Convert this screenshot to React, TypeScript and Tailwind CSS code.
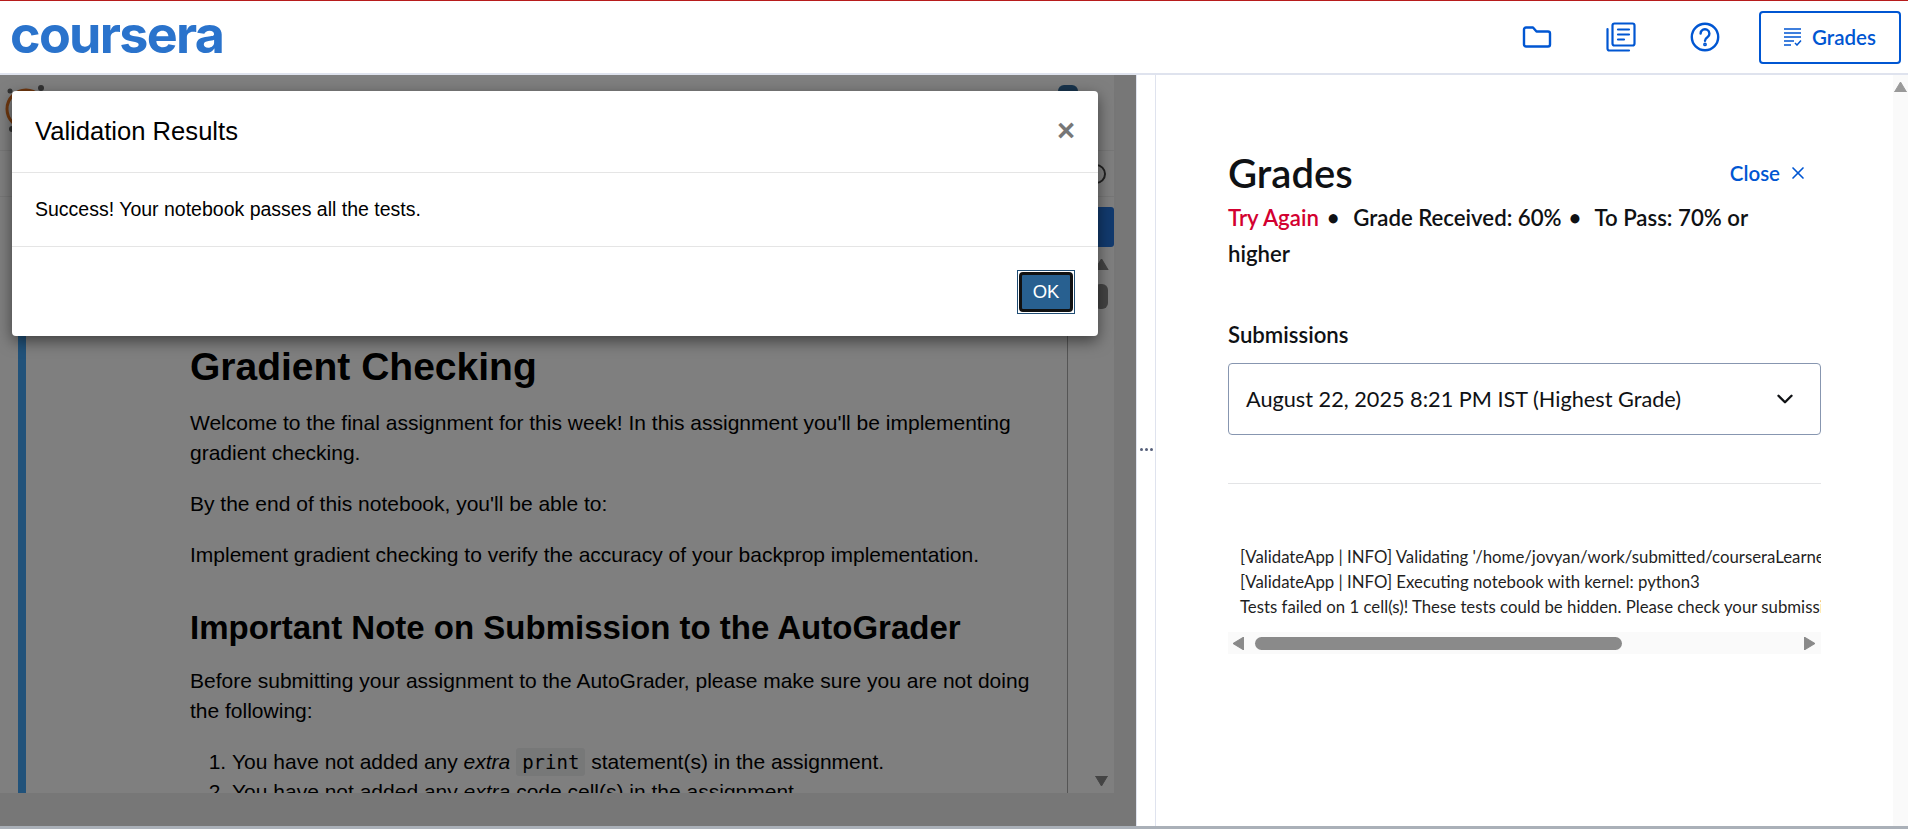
import React from "react"
import { ChevronDown, X } from "lucide-react"

const sans = "font-['Lato','Noto_Sans',sans-serif]"

const FolderIcon = () => (
    <svg width="30" height="22" viewBox="0 0 30 22" fill="none" stroke="#0056d2" strokeWidth="2.4" strokeLinejoin="round">
        <path d="M2 3.5a2 2 0 0 1 2-2h7l3.5 4H26a2 2 0 0 1 2 2V18.5a2 2 0 0 1-2 2H4a2 2 0 0 1-2-2z" />
    </svg>
)

const LibraryIcon = () => (
    <svg width="30" height="30" viewBox="0 0 30 30" fill="none" stroke="#0056d2" strokeWidth="2.2" strokeLinecap="round" strokeLinejoin="round">
        <rect x="6.5" y="1.5" width="22" height="22" rx="2" />
        <path d="M1.5 7v19.5a2 2 0 0 0 2 2H23" />
        <path d="M12 7.5h11M12 12.5h11M12 17.5h6" />
    </svg>
)

const HelpIcon = () => (
    <svg width="30" height="30" viewBox="0 0 30 30" fill="none" stroke="#0056d2" strokeWidth="2.4" strokeLinecap="round">
        <circle cx="15" cy="15" r="13.2" />
        <path d="M10.6 11.6a4.4 4.4 0 1 1 6.8 3.7c-1.5 1-2.4 1.8-2.4 3.4" />
        <circle cx="15" cy="22.4" r="0.7" fill="#0056d2" />
    </svg>
)

const GradesIcon = () => (
    <svg width="18" height="18" viewBox="0 0 18 18" fill="none" stroke="#0056d2" strokeWidth="1.5">
        <path d="M0 1h17M0 5h17M0 9h17M0 13h10M0 17h7" />
        <path d="M11 15l2 2 4-4.5" />
    </svg>
)

const Triangle = ({ dir, className }: { dir: "up" | "down" | "left" | "right"; className: string }) => {
    const points = {
        up: "6,0 12,10 0,10",
        down: "0,0 12,0 6,10",
        left: "10,0 10,12 0,6",
        right: "0,0 10,6 0,12"
    }
    return (
        <svg viewBox={dir === "up" || dir === "down" ? "0 0 12 10" : "0 0 10 12"} className={className}>
            <polygon points={points[dir]} fill="currentColor" stroke="currentColor" strokeWidth="1" strokeLinejoin="round" />
        </svg>
    )
}

const Notebook = () => (
    <div className="relative flex w-[1137px] flex-col border-r border-[#dfe3ee] bg-[#eeeeee] font-['Liberation_Sans',Arial,sans-serif]">
        <div className="flex h-[718px] w-[1114px] flex-col bg-white">
            <div className="flex h-[75px] items-start justify-between">
                <svg width="44" height="60" viewBox="0 0 44 60" className="ml-1 mt-[8px]" fill="none">
                    <circle cx="6" cy="8" r="2.5" fill="#666" />
                    <circle cx="37" cy="5" r="3" fill="#666" />
                    <circle cx="22" cy="26" r="19" stroke="#e0701f" strokeWidth="3" />
                    <circle cx="8" cy="46" r="3" fill="#666" />
                </svg>
                <div className="mr-[36px] mt-[10px] h-[20px] w-[20px] rounded-t-md bg-[#306998]" />
            </div>
            <div className="flex h-[47px] items-center justify-end border-y border-[#eeeeee] pr-[8px]">
                <div className="h-[20px] w-[20px] rounded-full border-2 border-[#444]" />
            </div>
            <div className="flex h-[60px] items-start justify-end pt-[10px]">
                <div className="h-[40px] w-[60px] rounded-[3px] bg-[#2574dc]" />
            </div>
            <div className="flex min-h-0 flex-1">
                <div className="ml-[18px] flex min-w-0 flex-1 overflow-hidden border-l-[8px] border-[#42a5f5]">
                    <div className="w-[1041px] overflow-hidden pl-[164px] pr-[25px] text-[21px] leading-[30px] text-black">
                        <h1 className="mt-[85px] text-[39px] leading-[50px] font-bold">Gradient Checking</h1>
                        <p className="mt-[16px]">Welcome to the final assignment for this week! In this assignment you'll be implementing gradient checking.</p>
                        <p className="mt-[21px]">By the end of this notebook, you'll be able to:</p>
                        <p className="mt-[21px]">Implement gradient checking to verify the accuracy of your backprop implementation.</p>
                        <h2 className="mt-[34px] text-[33px] leading-[48px] font-bold">Important Note on Submission to the AutoGrader</h2>
                        <p className="mt-[14px]">Before submitting your assignment to the AutoGrader, please make sure you are not doing the following:</p>
                        <ol className="mt-[21px] list-decimal pl-[42px]">
                            <li>
                                You have not added any <em>extra</em>{" "}
                                <code className="rounded-[3px] bg-[#eff0f1] px-[6px] py-[3px] font-['DejaVu_Sans_Mono',monospace] text-[19px]">print</code> statement(s) in the assignment.
                            </li>
                            <li>You have not added any <em>extra</em> code cell(s) in the assignment.</li>
                        </ol>
                    </div>
                </div>
                <div className="relative flex w-[47px] flex-col items-end border-l border-[#ababab] pr-[5px]">
                    <Triangle dir="up" className="mt-[2px] h-[11px] w-[15px] text-[#888]" />
                    <div className="mt-[14px] mr-[1px] h-[25px] w-[14px] rounded-md bg-[#888]" />
                    <Triangle dir="down" className="mt-auto mb-[7px] h-[10px] w-[15px] text-[#888]" />
                </div>
            </div>
        </div>

        {/* dim layer and the dialog on top of the notebook */}
        <div className="absolute inset-0 bg-black/50" />
        <div className="absolute left-[12px] top-[16px] flex h-[245px] w-[1086px] flex-col rounded-[4px] bg-white shadow-[0_5px_15px_rgba(0,0,0,0.5)]">
            <div className="flex h-[82px] items-center justify-between border-b border-[#e5e5e5] pl-[23px] pr-[23px]">
                <h3 className="text-[25.6px] text-black">Validation Results</h3>
                <span className="text-[31px] font-bold text-[#777]">×</span>
            </div>
            <div className="flex h-[74px] items-center border-b border-[#e5e5e5] pl-[23px] text-[19.5px] text-black">
                Success! Your notebook passes all the tests.
            </div>
            <div className="flex flex-1 items-start justify-end pt-[23px] pr-[23px]">
                <button className="flex h-[44px] w-[58px] items-center justify-center border border-[#204d74] bg-white">
                    <span className="flex h-[40px] w-[54px] items-center justify-center rounded-[4px] border-[3px] border-[#111] bg-[#286090] text-[18.5px] text-white">OK</span>
                </button>
            </div>
        </div>
    </div>
)

const GradesPanel = () => (
    <div className={`relative flex min-w-0 flex-1 border-l border-[#dfe3ee] ${sans}`}>
        <div className="min-w-0 flex-1 pl-[72px] pr-[72px] pt-[75px] text-[#1f1f1f]">
            <div className="flex items-center justify-between">
                <h2 className="text-[40px] leading-[46px] font-semibold text-[#0f1114]">Grades</h2>
                <button className="mr-[13px] flex items-center gap-[8px] text-[20.5px] font-semibold text-[#0056d2]">
                    Close <X size={20} strokeWidth={2} />
                </button>
            </div>
            <p className="mt-[4px] max-w-[540px] text-[22.2px] leading-[36px] font-semibold text-[#0f1114]">
                <span className="text-[#d30030]">Try Again</span>
                <span className="mx-[8px]">•</span> Grade Received: 60%
                <span className="ml-[7px] mr-[13px]">•</span>To Pass: 70% or higher
            </p>
            <h3 className="mt-[49px] text-[22.2px] leading-[28px] font-semibold text-[#0f1114]">Submissions</h3>
            <div className="mt-[14px] flex h-[72px] items-center justify-between rounded-[4px] border border-[#8796b0] pl-[17px] pr-[22px] text-[21.7px] text-[#0f1114]">
                August 22, 2025 8:21 PM IST (Highest Grade)
                <ChevronDown size={26} strokeWidth={2.2} />
            </div>
            <div className="mt-[48px] border-t border-[#e3e4e6]" />
            <div className="mt-[60px] bg-white">
                <div className="overflow-hidden pl-[12px] text-[16.8px] leading-[25px] whitespace-nowrap text-[#1f1f1f]">
                    <div>[ValidateApp | INFO] Validating '/home/jovyan/work/submitted/courseraLearner/W1A3/Gradient_Checking.ipynb'</div>
                    <div>[ValidateApp | INFO] Executing notebook with kernel: python3</div>
                    <div>Tests failed on 1 cell(s)! These tests could be hidden. Please check your submission.</div>
                </div>
                <div className="mt-[13px] flex h-[22px] items-center bg-[#fafafa] pl-[5px] pr-[6px]">
                    <Triangle dir="left" className="h-[13px] w-[11px] text-[#8a8a8a]" />
                    <div className="ml-[11px] h-[13px] w-[367px] rounded-full bg-[#8a8a8a]" />
                    <Triangle dir="right" className="ml-auto h-[13px] w-[11px] text-[#8a8a8a]" />
                </div>
            </div>
        </div>
        <div className="flex w-[15px] justify-center bg-[#fafafa] pt-[7px]">
            <Triangle dir="up" className="h-[10px] w-[13px] text-[#999]" />
        </div>
    </div>
)

const App = () => {
    return (
        <div className="flex h-[829px] w-[1908px] flex-col overflow-hidden bg-white">
            <header className={`flex h-[75px] shrink-0 items-center border-t border-b-2 border-t-[#b71c1c] border-b-[#dfe3ee] pl-[10px] pr-[7px] ${sans}`}>
                <span className="pb-[4px] font-['Inter',sans-serif] text-[52px] leading-none font-bold tracking-[-1.7px] text-[#2a73cc]">coursera</span>
                <div className="ml-auto flex items-center">
                    <FolderIcon />
                    <div className="ml-[54px]"><LibraryIcon /></div>
                    <div className="ml-[54px]"><HelpIcon /></div>
                    <button className="ml-[39px] flex h-[53px] w-[142px] items-center justify-center gap-[10px] rounded-[4px] border-2 border-[#0056d2] text-[20.5px] font-semibold text-[#0056d2]">
                        <GradesIcon />
                        Grades
                    </button>
                </div>
            </header>
            <main className="flex min-h-0 flex-1 border-b-[3px] border-[#aab0b8]">
                <Notebook />
                <div className="flex w-[18px] items-center justify-center gap-[2px] pb-[3px]">
                    <span className="h-[3px] w-[3px] rounded-full bg-[#56607a]" />
                    <span className="h-[3px] w-[3px] rounded-full bg-[#56607a]" />
                    <span className="h-[3px] w-[3px] rounded-full bg-[#56607a]" />
                </div>
                <GradesPanel />
            </main>
        </div>
    )
}

export default App
